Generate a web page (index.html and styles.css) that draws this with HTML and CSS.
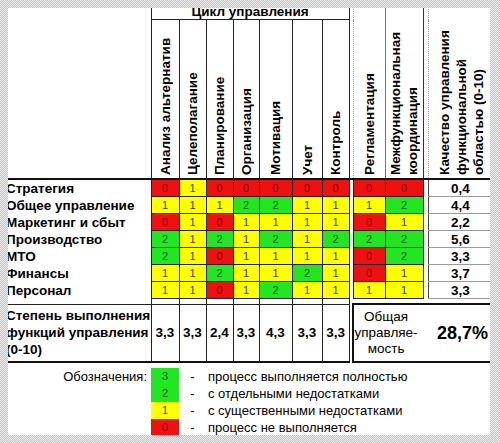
FILE: index.html
```html
<!DOCTYPE html>
<html lang="ru">
<head>
    <meta charset="UTF-8">
    <title>Цикл управления</title>
    <link rel="stylesheet" href="styles.css">
</head>
<body>
    <div class="sheet">
        <table class="matrix">
            <colgroup>
                <col class="w-label">
                <col class="w28"><col class="w27"><col class="w27"><col class="w26">
                <col class="w33"><col class="w30"><col class="w27">
                <col class="w4">
                <col class="w32"><col class="w38">
                <col class="w5">
                <col class="w70">
            </colgroup>

            <tr class="row-group">
                <td class="corner" rowspan="2"></td>
                <td class="group" colspan="7">Цикл управления</td>
                <td class="gap-head" rowspan="2"></td>
                <td class="head head-regl" rowspan="2"><div class="vh tall"><div class="vt">Регламентация</div></div></td>
                <td class="head head-coord" rowspan="2"><div class="vh tall"><div class="vt">Межфункциональная<br>координация</div></div></td>
                <td class="gap-head" rowspan="2"></td>
                <td class="head head-q" rowspan="2"><div class="vh tall"><div class="vt">Качество управления<br>функциональной<br>областью (0-10)</div></div></td>
            </tr>
            <tr class="row-heads">
                <td class="head"><div class="vh"><div class="vt">Анализ альтернатив</div></div></td>
                <td class="head"><div class="vh"><div class="vt">Целеполагание</div></div></td>
                <td class="head"><div class="vh"><div class="vt">Планирование</div></div></td>
                <td class="head"><div class="vh"><div class="vt">Организация</div></div></td>
                <td class="head"><div class="vh"><div class="vt">Мотивация</div></div></td>
                <td class="head"><div class="vh"><div class="vt">Учет</div></div></td>
                <td class="head"><div class="vh"><div class="vt">Контроль</div></div></td>
            </tr>

            <!-- оценки: 0 - красный, 1 - желтый, 2 - зеленый -->
            <tr class="row">
                <td class="lbl">Стратегия</td>
                <td class="r">0</td><td class="y">1</td><td class="r">0</td><td class="r">0</td><td class="r">0</td><td class="r">0</td><td class="r">0</td>
                <td class="gap"></td>
                <td class="r">0</td><td class="r">0</td>
                <td class="gap"></td>
                <td class="q">0,4</td>
            </tr>
            <tr class="row">
                <td class="lbl">Общее управление</td>
                <td class="y">1</td><td class="y">1</td><td class="y">1</td><td class="g">2</td><td class="g">2</td><td class="y">1</td><td class="y">1</td>
                <td class="gap"></td>
                <td class="y">1</td><td class="g">2</td>
                <td class="gap"></td>
                <td class="q">4,4</td>
            </tr>
            <tr class="row">
                <td class="lbl">Маркетинг и сбыт</td>
                <td class="r">0</td><td class="y">1</td><td class="r">0</td><td class="y">1</td><td class="y">1</td><td class="y">1</td><td class="y">1</td>
                <td class="gap"></td>
                <td class="r">0</td><td class="y">1</td>
                <td class="gap"></td>
                <td class="q">2,2</td>
            </tr>
            <tr class="row">
                <td class="lbl">Производство</td>
                <td class="g">2</td><td class="y">1</td><td class="g">2</td><td class="y">1</td><td class="g">2</td><td class="y">1</td><td class="g">2</td>
                <td class="gap"></td>
                <td class="g">2</td><td class="g">2</td>
                <td class="gap"></td>
                <td class="q">5,6</td>
            </tr>
            <tr class="row">
                <td class="lbl">МТО</td>
                <td class="g">2</td><td class="y">1</td><td class="r">0</td><td class="y">1</td><td class="y">1</td><td class="y">1</td><td class="y">1</td>
                <td class="gap"></td>
                <td class="r">0</td><td class="g">2</td>
                <td class="gap"></td>
                <td class="q">3,3</td>
            </tr>
            <tr class="row">
                <td class="lbl">Финансы</td>
                <td class="y">1</td><td class="y">1</td><td class="g">2</td><td class="y">1</td><td class="y">1</td><td class="g">2</td><td class="y">1</td>
                <td class="gap"></td>
                <td class="r">0</td><td class="y">1</td>
                <td class="gap"></td>
                <td class="q">3,7</td>
            </tr>
            <tr class="row">
                <td class="lbl">Персонал</td>
                <td class="y">1</td><td class="y">1</td><td class="r">0</td><td class="y">1</td><td class="g">2</td><td class="y">1</td><td class="y">1</td>
                <td class="gap"></td>
                <td class="y">1</td><td class="y">1</td>
                <td class="gap"></td>
                <td class="q q-last">3,3</td>
            </tr>

            <tr class="row-space">
                <td></td>
                <td class="sp"></td><td class="sp"></td><td class="sp"></td><td class="sp"></td><td class="sp"></td><td class="sp"></td><td class="sp"></td>
                <td></td><td></td><td></td><td></td><td></td>
            </tr>

            <tr class="row-sum">
                <td class="lbl sum-lbl">Степень выполнения<br>функций управления<br>(0-10)</td>
                <td class="sum">3,3</td><td class="sum">3,3</td><td class="sum">2,4</td><td class="sum">3,3</td><td class="sum">4,3</td><td class="sum">3,3</td><td class="sum">3,3</td>
                <td></td>
                <td class="total" colspan="4">
                    <div class="total-in">
                        <div class="total-lbl">Общая<br>управляе-<br>мость</div>
                        <div class="total-val">28,7%</div>
                    </div>
                </td>
            </tr>
        </table>

        <div class="legend">
            <div class="lg-title">Обозначения:</div>
            <div class="lg-box g">3</div><div class="lg-dash">-</div><div class="lg-text">процесс выполняется полностью</div>
            <div></div>
            <div class="lg-box g">2</div><div class="lg-dash">-</div><div class="lg-text">с отдельными недостатками</div>
            <div></div>
            <div class="lg-box y">1</div><div class="lg-dash">-</div><div class="lg-text">с существенными недостатками</div>
            <div></div>
            <div class="lg-box r">0</div><div class="lg-dash">-</div><div class="lg-text">процесс не выполняется</div>
        </div>
    </div>
</body>
</html>
```

FILE: styles.css
```css
html, body {
    margin: 0;
    padding: 0;
}

body {
    width: 500px;
    height: 443px;
    box-sizing: border-box;
    padding: 8px 10px 8px 8px;
    overflow: hidden;
    font-family: "Liberation Sans", Arial, sans-serif;
    color: #000;
    background: repeating-conic-gradient(#c2c2c2 0 25%, #eeeeee 0 50%) 0 0 / 2px 2px;
}

.sheet {
    height: 100%;
    background-color: #fff;
    overflow: hidden;
}

/* --- таблица --- */
.matrix {
    border-collapse: collapse;
    table-layout: fixed;
    width: 494px;
    margin: -4px 0 0 -4px;
}
.matrix td {
    padding: 0;
    font-size: 13.5px;
    text-align: center;
}

.w-label { width: 147px; }
.w4 { width: 4px; }
.w5 { width: 5px; }
.w26 { width: 26px; }
.w27 { width: 27px; }
.w28 { width: 28px; }
.w30 { width: 30px; }
.w32 { width: 32px; }
.w33 { width: 33px; }
.w38 { width: 38px; }
.w70 { width: 70px; }

.row-group td { height: 15px; }
.group {
    font-weight: bold;
    line-height: 15px;
    border: 1px solid #222;
    border-top: none;
}
.corner, .gap-head {
    border-bottom: 2px solid #111;
}

.head {
    border-left: 1px solid #222;
    border-right: 1px solid #222;
    border-bottom: 2px solid #111;
    vertical-align: bottom;
}
.head-regl { border-left: 1px dotted #9a9a9a; border-right: 1px solid #777; }
.head-coord { border-left: 1px solid #777; border-right: 1px solid #333; }
.head-q { border-left: 1px dotted #9a9a9a; border-right: none; }

.vh {
    height: 158px;
    display: flex;
    justify-content: center;
}
.vh.tall { height: 173px; }
.vt {
    writing-mode: vertical-rl;
    transform: rotate(180deg);
    padding-top: 3px;
    font-weight: bold;
    line-height: 17px;
    text-align: start;
    white-space: nowrap;
}
.head-q .vt { margin-right: 4px; }

.row td { height: 16px; }
.lbl {
    text-align: left !important;
    padding-left: 2px !important;
    font-weight: bold;
    white-space: nowrap;
}

.r, .y, .g {
    font-size: 11px !important;
    border: 1px solid #222;
}
.r { background-color: #ee1111; color: #7a0000; }
.y { background-color: #ffff00; color: #3a3a00; }
.g { background-color: #22e622; color: #0a5a0a; }

.q {
    font-weight: bold;
    border-top: 1px solid #9a9a9a;
    border-bottom: 1px solid #9a9a9a;
    border-left: 1px solid #444;
    text-align: center;
    padding-right: 6px !important;
}

.row-space td { height: 4px; }
.sp {
    border-left: 1px solid #222;
    border-right: 1px solid #222;
}

.row-sum td { height: 56px; }
.sum-lbl {
    line-height: 17px;
    border-top: 1px solid #222;
    border-bottom: 2px solid #111;
}
.sum {
    font-weight: bold;
    border: 1px solid #222;
    border-bottom: 2px solid #111;
}
.total {
    border: 2px solid #111;
    text-align: left !important;
}
.total-in {
    display: flex;
    align-items: center;
}
.total-lbl {
    width: 64px;
    text-align: center;
    line-height: 16px;
}
.total-val {
    margin-left: 19px;
    font-size: 18px;
    font-weight: bold;
}

/* --- обозначения --- */
.legend {
    display: grid;
    grid-template-columns: 143px 28px 27px 1fr;
    grid-auto-rows: 17px;
    margin-top: 5px;
    font-size: 13px;
    line-height: 17px;
}
.lg-title {
    text-align: right;
    padding-right: 4px;
}
.lg-box {
    text-align: center;
    font-size: 11px;
    border: none;
}
.lg-dash {
    text-align: center;
}
.lg-text {
    padding-left: 2px;
    white-space: nowrap;
}
```
